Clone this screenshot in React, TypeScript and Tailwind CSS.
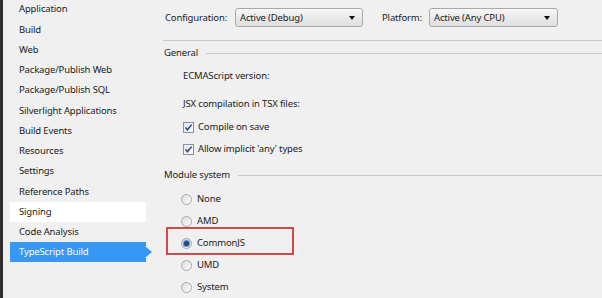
import type { ReactNode } from 'react';

const navItems = [
  'Application',
  'Build',
  'Web',
  'Package/Publish Web',
  'Package/Publish SQL',
  'Silverlight Applications',
  'Build Events',
  'Resources',
  'Settings',
  'Reference Paths',
  'Signing',
  'Code Analysis',
  'TypeScript Build',
];

function Dropdown({ value, width }: { value: string; width: string }) {
  return (
    <div
      className={`${width} h-[19px] flex items-center justify-between pl-[4px] pr-[7px] rounded-[3px] border border-[#a9a9a9] bg-gradient-to-b from-[#f7f7f7] to-[#dedede]`}
    >
      <span>{value}</span>
      <span className="w-0 h-0 border-l-[3px] border-r-[3px] border-t-[4px] border-l-transparent border-r-transparent border-t-[#111]" />
    </div>
  );
}

function SectionHeader({ title }: { title: string }) {
  return (
    <div className="flex items-center h-[14px] pl-[1px]">
      <span>{title}</span>
      <div className="flex-1 h-px bg-[#c9c9c9] ml-[8px] mt-[1px]" />
    </div>
  );
}

function Checkbox({ label }: { label: string }) {
  return (
    <div className="flex items-center h-[20px] pl-[20px]">
      <span className="w-[11px] h-[11px] border border-[#8f8f9a] bg-gradient-to-br from-[#dfe6f3] to-[#fafcff] flex items-center justify-center">
        <svg width="9" height="9" viewBox="0 0 9 9">
          <path d="M1.5 4.5 L3.5 6.8 L7.6 1.6" fill="none" stroke="#31457a" strokeWidth="1.5" />
        </svg>
      </span>
      <span className="ml-[4px]">{label}</span>
    </div>
  );
}

function Radio({ label, checked, children }: { label: string; checked?: boolean; children?: ReactNode }) {
  return (
    <div className="relative flex items-center h-[22px] pl-[18px]">
      {children}
      <span className="w-[11px] h-[11px] rounded-full border border-[#a8a8a8] bg-gradient-to-br from-[#dcdcdc] to-[#fdfdfd] flex items-center justify-center">
        {checked && <span className="w-[5px] h-[5px] rounded-full bg-[#1d4f86] shadow-[0_0_1px_1px_#5a86b8]" />}
      </span>
      <span className="ml-[5px]">{label}</span>
    </div>
  );
}

export default function App() {
  return (
    <div className="w-[602px] h-[298px] overflow-hidden flex bg-[#f0f0f0] text-[9.5px] tracking-[-0.15px] text-[#1b1b1b] font-['Noto_Sans',sans-serif] leading-none">
      {/* left frame edge */}
      <div className="w-[3px] h-full bg-[#2e2e2e]" />

      {/* Sidebar */}
      <div className="w-[160px] h-full -mt-[1px]">
        {navItems.map((item) => {
          const active = item === 'TypeScript Build';
          const hover = item === 'Signing';
          return (
            <div
              key={item}
              className={`relative h-[20.25px] ml-[7px] w-[136px] pl-[9px] flex items-center ${
                active ? 'bg-[#3797f4] text-white' : hover ? 'bg-white' : ''
              }`}
            >
              {item}
              {active && (
                <span className="absolute -right-[6px] top-1/2 -translate-y-1/2 w-0 h-0 border-t-[5px] border-b-[5px] border-l-[6px] border-t-transparent border-b-transparent border-l-[#3797f4]" />
              )}
            </div>
          );
        })}
      </div>

      {/* Content */}
      <div className="flex-1 h-full">
        <div className="flex items-center pt-[8px] pl-[2px]">
          <span className="w-[70px]">Configuration:</span>
          <Dropdown value="Active (Debug)" width="w-[128px]" />
          <span className="ml-[19px] w-[47px]">Platform:</span>
          <Dropdown value="Active (Any CPU)" width="w-[129px]" />
        </div>

        <div className="h-px bg-[#c9c9c9] mt-[13px]" />

        <div className="mt-[5px]">
          <SectionHeader title="General" />
        </div>

        <div className="pl-[20px] h-[20px] flex items-center mt-[6px]">ECMAScript version:</div>
        <div className="pl-[20px] h-[20px] flex items-center mt-[8px]">JSX compilation in TSX files:</div>

        <div className="mt-[3px]">
          <Checkbox label="Compile on save" />
        </div>
        <div className="mt-[2px]">
          <Checkbox label="Allow implicit 'any' types" />
        </div>

        <div className="mt-[9px]">
          <SectionHeader title="Module system" />
        </div>

        <div className="mt-[6px]">
          <Radio label="None" />
          <Radio label="AMD" />
          <Radio label="CommonJS" checked>
            <div className="absolute left-[3px] top-[-5px] w-[128px] h-[28px] border-2 border-[#d24a48]" />
          </Radio>
          <Radio label="UMD" />
          <Radio label="System" />
        </div>
      </div>
    </div>
  );
}
